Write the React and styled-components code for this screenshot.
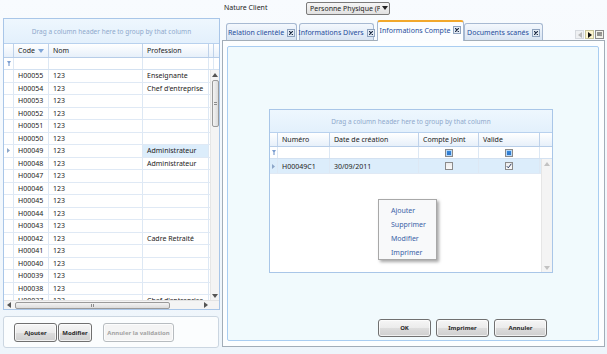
import React from "react";
import styled, { createGlobalStyle, css } from "styled-components";

const GlobalStyle = createGlobalStyle`
  body {
    margin: 0;
    font-family: "Noto Sans", "Open Sans", sans-serif;
  }
`;

const Page = styled.div`
  display: flex;
  width: 607px;
  height: 354px;
  overflow: hidden;
  background: linear-gradient(#f8fbfe, #eef5fb);
  font-family: "Noto Sans", "Open Sans", sans-serif;
  font-size: 7px;
  color: #1c1c1c;
`;

/* ---------- generic grid ---------- */

const GridFrame = styled.div`
  position: relative;
  box-sizing: border-box;
  width: ${p => p.$w}px;
  height: ${p => p.$h}px;
  border: 1px solid #a9c6e8;
  background: #fff;
  display: flex;
  flex-direction: column;
`;

const GroupPanel = styled.div`
  box-sizing: border-box;
  height: ${p => p.$h}px;
  flex: none;
  display: flex;
  align-items: center;
  justify-content: center;
  background: linear-gradient(#eef7fe, #e3f0fc);
  border-bottom: 1px solid #b8d1ee;
  color: #8fa9cc;
  font-size: 6.5px;
`;

const HeadRow = styled.div`
  box-sizing: border-box;
  height: ${p => p.$h}px;
  flex: none;
  display: flex;
  background: linear-gradient(#ffffff, #e7f0fa);
  border-bottom: 1px solid #b7cde8;
`;

const FilterRow = styled.div`
  box-sizing: border-box;
  height: 12px;
  flex: none;
  display: flex;
  border-bottom: 1px solid #d3e1f1;
`;

const Row = styled.div`
  box-sizing: border-box;
  height: ${p => p.$h}px;
  flex: none;
  display: flex;
  border-bottom: 1px solid #dfe9f5;
  background: ${p => (p.$selected ? "#dcedfb" : "transparent")};
`;

const Cell = styled.div`
  box-sizing: border-box;
  width: ${p => p.$w}px;
  flex: none;
  display: flex;
  align-items: center;
  justify-content: ${p => (p.$center ? "center" : "flex-start")};
  padding-left: ${p => (p.$center ? 0 : 4)}px;
  border-right: 1px solid ${p => (p.$head ? "#bfd2ea" : "#dde8f4")};
  white-space: nowrap;
  overflow: hidden;
  background: ${p => (p.$tint ? "#dcedfb" : "transparent")};
  color: ${p => (p.$head ? "#222" : "inherit")};
`;

const Filler = styled.div`
  flex: 1;
`;

const Body = styled.div`
  flex: 1;
  min-height: 0;
  display: flex;
`;

const Rows = styled.div`
  flex: 1;
  min-width: 0;
  overflow: hidden;
  display: flex;
  flex-direction: column;
`;

const VScroll = styled.div`
  box-sizing: border-box;
  width: ${p => p.$w}px;
  flex: none;
  display: flex;
  flex-direction: column;
  align-items: center;
  background: #f4f4f4;
  border-left: 1px solid #e6e6e6;
`;

const HScroll = styled.div`
  box-sizing: border-box;
  height: 9px;
  flex: none;
  display: flex;
  align-items: center;
  background: #f4f4f4;
  border-top: 1px solid #e3e3e3;
`;

const ArrowBox = styled.div`
  width: 9px;
  height: 9px;
  flex: none;
  display: flex;
  align-items: center;
  justify-content: center;
`;

const Thumb = styled.div`
  box-sizing: border-box;
  border: 1px solid #9a9a9a;
  border-radius: 2px;
  display: flex;
  align-items: center;
  justify-content: center;
  ${p =>
    p.$vertical
      ? css`
          width: 7px;
          height: ${p.$len}px;
          margin-top: 1px;
          background: linear-gradient(90deg, #f3f3f3, #dcdcdc);
        `
      : css`
          height: 7px;
          width: ${p.$len}px;
          margin-left: 2px;
          background: linear-gradient(#f3f3f3, #dcdcdc);
        `}
`;

const Grip = styled.div`
  width: ${p => (p.$vertical ? 3 : 4)}px;
  height: ${p => (p.$vertical ? 4 : 3)}px;
  background: repeating-linear-gradient(
    ${p => (p.$vertical ? "180deg" : "90deg")},
    #8c8c8c 0 1px,
    transparent 1px 2px
  );
`;

const Tri = ({ dir, color = "#555" }) => {
  const pts = {
    up: "0,4 3,0 6,4",
    down: "0,0 6,0 3,4",
    left: "4,0 4,6 0,3",
    right: "0,0 0,6 4,3"
  }[dir];
  const vertical = dir === "up" || dir === "down";
  return (
    <svg width={vertical ? 6 : 4} height={vertical ? 4 : 6} viewBox={vertical ? "0 0 6 4" : "0 0 4 6"}>
      <polygon points={pts} fill={color} />
    </svg>
  );
};

const Funnel = () => (
  <svg width="4" height="5" viewBox="0 0 4 5">
    <polygon points="0,0 4,0 2.6,2.2 2.6,5 1.4,5 1.4,2.2" fill="#7d9fd0" />
  </svg>
);

const SortArrow = styled.span`
  margin-left: auto;
  margin-right: 4px;
  display: flex;
`;

const Indicator = () => (
  <svg width="3" height="5" viewBox="0 0 3 5">
    <polygon points="0,0 3,2.5 0,5" fill="#8ca6c8" />
  </svg>
);

const CheckBox = styled.div`
  box-sizing: border-box;
  width: 8px;
  height: 8px;
  border: 1px solid #8b8b8b;
  background: ${p =>
    p.$mixed
      ? "linear-gradient(#3d8fe0, #2a6fc4)"
      : "linear-gradient(#ececec, #fafafa)"};
  box-shadow: ${p => (p.$mixed ? "inset 0 0 0 1px #b8d8f6" : "none")};
  display: flex;
  align-items: center;
  justify-content: center;
`;

const Check = () => (
  <svg width="6" height="6" viewBox="0 0 6 6">
    <path d="M0.8 3.2 L2.3 4.8 L5.3 0.8" stroke="#2b3d63" strokeWidth="1" fill="none" />
  </svg>
);

/* ---------- left pane ---------- */

const LeftPane = styled.div`
  width: 217px;
  flex: none;
  padding: 18px 0 0 3px;
  display: flex;
  flex-direction: column;
  gap: 6px;
`;

const ButtonBar = styled.div`
  box-sizing: border-box;
  width: 216px;
  height: 32px;
  border: 1px solid #cbd6e1;
  border-radius: 3px;
  background: #fbfdfe;
  display: flex;
  align-items: center;
  padding: 1px 0 0 10px;
  gap: 1px;
`;

const Button = styled.button`
  box-sizing: border-box;
  width: ${p => p.$w}px;
  height: ${p => p.$h || 19}px;
  margin-left: ${p => p.$ml || 0}px;
  padding: 0;
  border: 1px solid ${p => (p.disabled ? "#b7bcc0" : "#707070")};
  border-radius: 3px;
  background: ${p =>
    p.disabled
      ? "#f4f4f4"
      : "linear-gradient(#f6f6f6 0%, #ebebeb 50%, #dddddd 51%, #cfcfcf 100%)"};
  box-shadow: inset 0 0 0 1px rgba(255, 255, 255, 0.7);
  font-family: "Noto Sans", "Open Sans", sans-serif;
  font-size: 6px;
  font-weight: 700;
  white-space: nowrap;
  color: ${p => (p.disabled ? "#a3a3a3" : "#2a2a2a")};
`;

/* ---------- right pane ---------- */

const RightPane = styled.div`
  width: 383px;
  flex: none;
  margin-left: 2px;
  display: flex;
  flex-direction: column;
`;

const TopBar = styled.div`
  height: 18px;
  display: flex;
  align-items: center;
  padding-left: 2px;
`;

const Label = styled.div`
  width: 82px;
  padding-bottom: 3px;
`;

const Select = styled.div`
  box-sizing: border-box;
  width: 84px;
  height: 13px;
  margin-top: -2px;
  border: 1px solid #7a7a7a;
  border-radius: 2px;
  background: linear-gradient(#f6f6f6, #e1e1e1);
  display: flex;
  align-items: center;
  padding-left: 3px;
  overflow: hidden;
  white-space: nowrap;
`;

const SelectText = styled.span`
  flex: 1;
  overflow: hidden;
`;

const SelectArrow = styled.span`
  width: 9px;
  display: flex;
  justify-content: center;
`;

const TabStrip = styled.div`
  height: 22px;
  display: flex;
  align-items: flex-end;
  padding-left: 4px;
`;

const Tab = styled.div`
  box-sizing: border-box;
  width: ${p => p.$w}px;
  height: ${p => (p.$active ? 21 : 17)}px;
  margin-right: ${p => p.$mr || 0}px;
  margin-bottom: ${p => (p.$active ? -1 : 0)}px;
  position: relative;
  z-index: ${p => (p.$active ? 2 : 1)};
  display: flex;
  align-items: center;
  justify-content: center;
  gap: 3px;
  white-space: nowrap;
  border: 1px solid #a7b9d2;
  border-bottom: none;
  border-radius: 3px 3px 0 0;
  background: ${p =>
    p.$active ? "#fbfdff" : "linear-gradient(#f4f8fd, #d8e4f3)"};
  color: #1f4d9c;
  padding-top: ${p => (p.$active ? 0 : 1)}px;
  ${p =>
    p.$active &&
    css`
      border-top: 2px solid #f2a82c;
      padding-bottom: 3px;
    `}
`;

const CloseBox = styled.span`
  box-sizing: border-box;
  width: 8px;
  height: 8px;
  flex: none;
  border: 1px solid #8fa3bf;
  background: #e3ebf5;
  display: flex;
  align-items: center;
  justify-content: center;
`;

const CloseX = () => (
  <svg width="4" height="4" viewBox="0 0 4 4">
    <path d="M0 0 L4 4 M4 0 L0 4" stroke="#1d2b45" strokeWidth="1.2" />
  </svg>
);

const NavGroup = styled.div`
  margin-left: auto;
  margin-right: 1px;
  align-self: flex-end;
  margin-bottom: 1px;
  display: flex;
  gap: 1px;
`;

const NavBtn = styled.div`
  box-sizing: border-box;
  width: 9px;
  height: 9px;
  display: flex;
  align-items: center;
  justify-content: center;
  border: 1px solid ${p => p.$border || "#d5d9de"};
  background: ${p => p.$bg || "#eef0f2"};
`;

const TabPanel = styled.div`
  box-sizing: border-box;
  height: 307px;
  border: 1px solid #a2adb8;
  background: #fcfeff;
  padding: 5px 5px 5px 4px;
  display: flex;
`;

const Inner = styled.div`
  position: relative;
  flex: 1;
  border: 1px solid #a9cdf1;
  border-radius: 2px;
  background: #f1fafd;
  display: flex;
  flex-direction: column;
  padding: 62px 0 0 41px;
`;

const ActionRow = styled.div`
  margin-top: auto;
  display: flex;
  justify-content: flex-end;
  gap: 5px;
  padding: 0 51px 3px 0;
`;

const Menu = styled.div`
  position: absolute;
  left: 150px;
  top: 152px;
  box-sizing: border-box;
  width: 59px;
  height: 61px;
  background: #f8f9fa;
  border: 1px solid #a8a8a8;
  box-shadow: 2px 2px 3px rgba(0, 0, 0, 0.35);
  display: flex;
  flex-direction: column;
  padding: 3px 0 0 12px;
`;

const MenuItem = styled.div`
  height: 14px;
  display: flex;
  align-items: center;
  color: #3a62a7;
`;

/* ---------- data ---------- */

const leftCols = [
  { key: "ind", w: 10, center: true },
  { key: "code", label: "Code", w: 35 },
  { key: "nom", label: "Nom", w: 94 },
  { key: "prof", label: "Profession", w: 66 }
];

const professions = {
  55: "Enseignante",
  54: "Chef d'entreprise",
  49: "Administrateur",
  48: "Administrateur",
  42: "Cadre Retraité",
  37: "Chef d'entreprise"
};

const clients = Array.from({ length: 19 }, (_, i) => {
  const n = 55 - i;
  return { code: `H000${n}`, nom: "123", prof: professions[n] || "", current: n === 49 };
});

const innerCols = [
  { key: "ind", w: 8, center: true },
  { key: "num", label: "Numéro", w: 52 },
  { key: "date", label: "Date de création", w: 89 },
  { key: "joint", label: "Compte Joint", w: 60, center: true },
  { key: "valide", label: "Valide", w: 61, center: true }
];

const tabs = [
  { label: "Relation clientèle", w: 71, mr: 2 },
  { label: "Informations Divers", w: 75, mr: 3 },
  { label: "Informations Compte", w: 87, active: true },
  { label: "Documents scanés", w: 79 }
];

/* ---------- pieces ---------- */

const ClientGrid = () => (
  <GridFrame $w={217} $h={292}>
    <GroupPanel $h={25}>Drag a column header here to group by that column</GroupPanel>
    <HeadRow $h={14}>
      {leftCols.map(c => (
        <Cell key={c.key} $w={c.w} $head>
          {c.label}
          {c.key === "code" && (
            <SortArrow>
              <Tri dir="down" color="#7fa5d8" />
            </SortArrow>
          )}
        </Cell>
      ))}
      <Cell $w={3} $head />
    </HeadRow>
    <FilterRow>
      {leftCols.map(c => (
        <Cell key={c.key} $w={c.w} $center={c.center}>
          {c.key === "ind" && <Funnel />}
        </Cell>
      ))}
      <Cell $w={3} />
    </FilterRow>
    <Body>
      <Rows>
        {clients.map(r => (
          <Row key={r.code} $h={12.5}>
            <Cell $w={10} $center>{r.current && <Indicator />}</Cell>
            <Cell $w={35}>{r.code}</Cell>
            <Cell $w={94}>{r.nom}</Cell>
            <Cell $w={66} $tint={r.current}>{r.prof}</Cell>
            <Filler />
          </Row>
        ))}
      </Rows>
      <VScroll $w={9}>
        <ArrowBox><Tri dir="up" /></ArrowBox>
        <Thumb $vertical $len={47}><Grip $vertical /></Thumb>
        <Filler />
        <ArrowBox><Tri dir="down" /></ArrowBox>
      </VScroll>
    </Body>
    <HScroll>
      <ArrowBox><Tri dir="left" /></ArrowBox>
      <Thumb $len={155}><Grip /></Thumb>
      <Filler />
      <ArrowBox><Tri dir="right" /></ArrowBox>
      <ArrowBox />
    </HScroll>
  </GridFrame>
);

const AccountGrid = () => (
  <GridFrame $w={284} $h={164}>
    <GroupPanel $h={23}>Drag a column header here to group by that column</GroupPanel>
    <HeadRow $h={14}>
      {innerCols.map(c => (
        <Cell key={c.key} $w={c.w} $head>{c.label}</Cell>
      ))}
      <Filler />
    </HeadRow>
    <FilterRow>
      {innerCols.map(c => (
        <Cell key={c.key} $w={c.w} $center={c.center}>
          {c.key === "ind" && <Funnel />}
          {(c.key === "joint" || c.key === "valide") && <CheckBox $mixed />}
        </Cell>
      ))}
    </FilterRow>
    <Body>
      <Rows>
        <Row $h={15} $selected>
          <Cell $w={8} $center><Indicator /></Cell>
          <Cell $w={52}>H00049C1</Cell>
          <Cell $w={89}>30/09/2011</Cell>
          <Cell $w={60} $center><CheckBox /></Cell>
          <Cell $w={61} $center><CheckBox><Check /></CheckBox></Cell>
        </Row>
      </Rows>
      <VScroll $w={11}>
        <ArrowBox><Tri dir="up" color="#c2c2c2" /></ArrowBox>
        <Filler />
        <ArrowBox><Tri dir="down" color="#c2c2c2" /></ArrowBox>
      </VScroll>
    </Body>
  </GridFrame>
);

export default function App() {
  return (
    <>
      <GlobalStyle />
      <Page>
        <LeftPane>
          <ClientGrid />
          <ButtonBar>
            <Button $w={43}>Ajouter</Button>
            <Button $w={34}>Modifier</Button>
            <Button $w={71} $ml={10} disabled>Annuler la validation</Button>
          </ButtonBar>
        </LeftPane>

        <RightPane>
          <TopBar>
            <Label>Nature Client</Label>
            <Select>
              <SelectText>Personne Physique (Personne</SelectText>
              <SelectArrow><Tri dir="down" color="#222" /></SelectArrow>
            </Select>
          </TopBar>

          <TabStrip>
            {tabs.map(t => (
              <Tab key={t.label} $w={t.w} $mr={t.mr} $active={t.active}>
                {t.label}
                <CloseBox><CloseX /></CloseBox>
              </Tab>
            ))}
            <NavGroup>
              <NavBtn><Tri dir="left" color="#b8b8b8" /></NavBtn>
              <NavBtn $bg="#fdf5cf" $border="#c9c59a"><Tri dir="right" color="#111" /></NavBtn>
              <NavBtn $bg="#f2f2ea" $border="#8a8a8a">
                <svg width="5" height="5" viewBox="0 0 5 5">
                  <path d="M0 1 H5 M0 3 H3" stroke="#333" strokeWidth="1" />
                  <polygon points="3,2.5 5,2.5 4,4.5" fill="#333" />
                </svg>
              </NavBtn>
            </NavGroup>
          </TabStrip>

          <TabPanel>
            <Inner>
              <AccountGrid />
              <Menu>
                <MenuItem>Ajouter</MenuItem>
                <MenuItem>Supprimer</MenuItem>
                <MenuItem>Modifier</MenuItem>
                <MenuItem>Imprimer</MenuItem>
              </Menu>
              <ActionRow>
                <Button $w={53} $h={18}>OK</Button>
                <Button $w={53} $h={18}>Imprimer</Button>
                <Button $w={53} $h={18}>Annuler</Button>
              </ActionRow>
            </Inner>
          </TabPanel>
        </RightPane>
      </Page>
    </>
  );
}
